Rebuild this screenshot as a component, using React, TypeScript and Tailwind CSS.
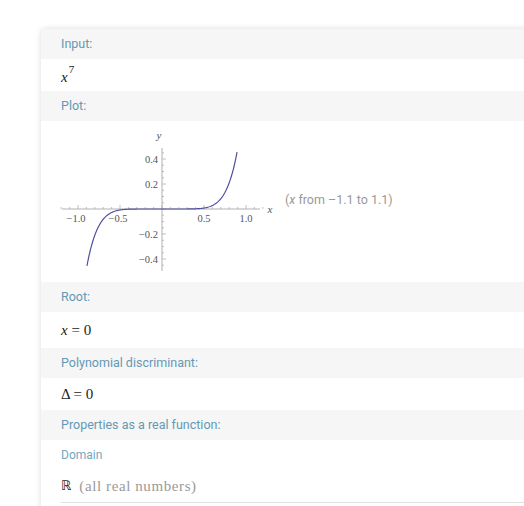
import React from "react";

const serif = "font-['Liberation_Serif','Times_New_Roman',serif]";
const sans = "font-['Roboto','Liberation_Sans',sans-serif]";

function PodHeader({ children }: { children: React.ReactNode }) {
  return (
    <div className={`h-[30px] bg-[#f6f6f6] pl-5 flex items-center text-[12.5px] text-[#6499b3] ${sans}`}>
      {children}
    </div>
  );
}

function Plot() {
  // y axis at x=121, x axis at y=88 (relative to the pod)
  const ox = 121;
  const oy = 88;
  const sx = 84;
  const sy = 125;
  const xe = Math.pow(0.455, 1 / 7);
  const pts: string[] = [];
  for (let i = 0; i <= 200; i++) {
    const x = -xe + (i / 200) * 2 * xe;
    const y = Math.pow(x, 7);
    pts.push(`${(ox + sx * x).toFixed(2)},${(oy - sy * y).toFixed(2)}`);
  }
  const xTicks: number[] = [];
  for (let i = -12; i <= 12; i++) xTicks.push(i / 10);
  const yTicks: number[] = [];
  for (let i = -9; i <= 9; i++) yTicks.push(i / 20);

  return (
    <svg width="240" height="161" className="shrink-0">
      <line x1={21} y1={oy} x2={219} y2={oy} stroke="#b0b0b0" strokeWidth={1} />
      <line x1={ox} y1={27} x2={ox} y2={150} stroke="#b0b0b0" strokeWidth={1} />
      {xTicks.map((t) => {
        const major = Math.abs(t * 2 - Math.round(t * 2)) < 1e-6;
        const px = ox + sx * t;
        return (
          <line key={`x${t}`} x1={px} y1={oy} x2={px} y2={oy - (major ? 4 : 2)} stroke="#b0b0b0" strokeWidth={0.8} />
        );
      })}
      {yTicks.map((t) => {
        const major = Math.abs(t * 5 - Math.round(t * 5)) < 1e-6;
        const py = oy - sy * t;
        return (
          <line key={`y${t}`} x1={ox} y1={py} x2={ox + (major ? 4 : 2)} y2={py} stroke="#b0b0b0" strokeWidth={0.8} />
        );
      })}
      <polyline points={pts.join(" ")} fill="none" stroke="#4f4f9e" strokeWidth={1.2} />
      <g fontFamily="'Liberation Serif','Times New Roman',serif" fontSize="10.5" fill="#555">
        <text x={ox - sx - 2} y={oy + 13} textAnchor="middle">−1.0</text>
        <text x={ox - sx / 2 - 2} y={oy + 13} textAnchor="middle">−0.5</text>
        <text x={ox + sx / 2} y={oy + 13} textAnchor="middle">0.5</text>
        <text x={ox + sx} y={oy + 13} textAnchor="middle">1.0</text>
        <text x={ox - 4} y={oy - sy * 0.4 + 3.5} textAnchor="end">0.4</text>
        <text x={ox - 4} y={oy - sy * 0.2 + 3.5} textAnchor="end">0.2</text>
        <text x={ox - 4} y={oy + sy * 0.2 + 3.5} textAnchor="end">−0.2</text>
        <text x={ox - 4} y={oy + sy * 0.4 + 3.5} textAnchor="end">−0.4</text>
        <text x={118} y={18} fontStyle="italic" fontSize="11" textAnchor="middle">y</text>
        <text x={229} y={92} fontStyle="italic" fontSize="11" textAnchor="middle">x</text>
      </g>
    </svg>
  );
}

export default function App() {
  return (
    <div className="w-[524px] h-[506px] overflow-hidden bg-white">
      <div className="ml-[41px] mt-[29px] w-[520px] bg-white rounded-tl-[5px] shadow-[0_0_6px_rgba(0,0,0,0.14)] overflow-hidden">
        <PodHeader>Input:</PodHeader>
        <div className={`h-[32px] pl-5 flex items-center text-[15px] text-[#222] ${serif}`}>
          <span className="flex items-start">
            <i className="mt-[5px]">x</i>
            <span className="text-[11px] ml-[1px]">7</span>
          </span>
        </div>
        <PodHeader>Plot:</PodHeader>
        <div className="h-[161px] flex items-center">
          <Plot />
          <span className={`ml-[4px] -mt-[3px] text-[12.5px] text-[#999] ${sans}`}>
            (<i>x</i> from –1.1 to 1.1)
          </span>
        </div>
        <PodHeader>Root:</PodHeader>
        <div className={`h-[36px] pl-5 flex items-center text-[15px] text-[#222] ${serif}`}>
          <span>
            <i>x</i> = 0
          </span>
        </div>
        <PodHeader>Polynomial discriminant:</PodHeader>
        <div className={`h-[32px] pl-5 flex items-center text-[15px] text-[#222] ${serif}`}>
          <span>Δ = 0</span>
        </div>
        <PodHeader>Properties as a real function:</PodHeader>
        <div className={`h-[30px] pl-5 flex items-center text-[12px] text-[#72a8c1] ${sans}`}>Domain</div>
        <div className="ml-5 h-[33px] flex items-center border-b border-[#e0e0e0]">
          <span className="text-[13px] text-[#222] font-['DejaVu_Sans',sans-serif]">ℝ</span>
          <span className={`ml-[8px] text-[15px] tracking-[0.6px] text-[#9a9a9a] ${serif}`}>(all real numbers)</span>
        </div>
        <div className="h-[20px]" />
      </div>
    </div>
  );
}
